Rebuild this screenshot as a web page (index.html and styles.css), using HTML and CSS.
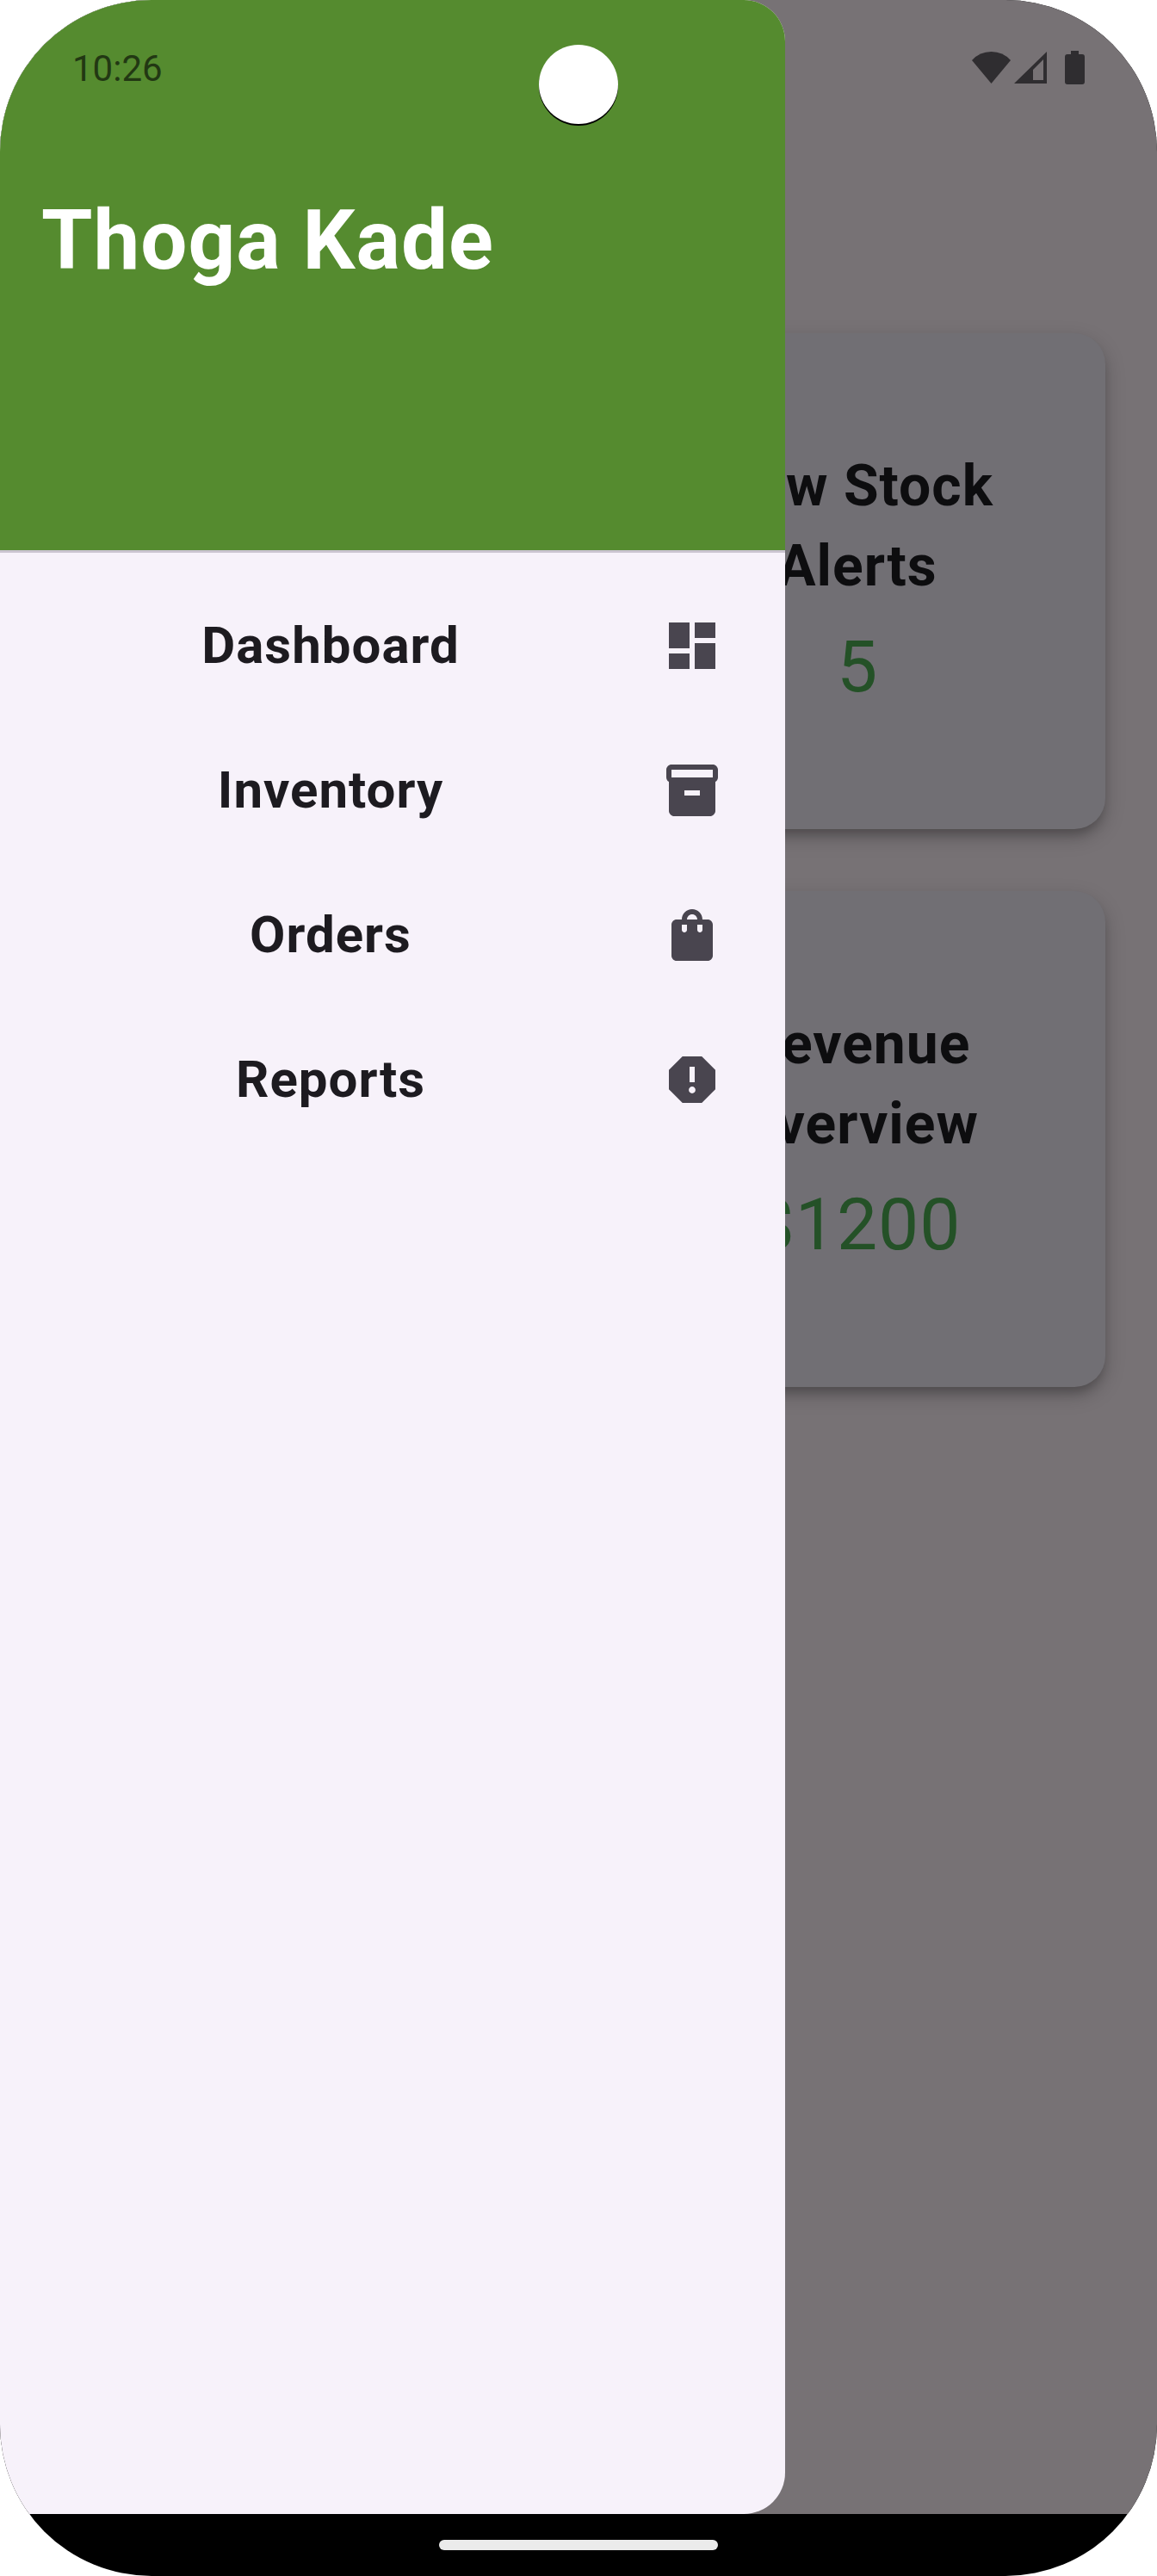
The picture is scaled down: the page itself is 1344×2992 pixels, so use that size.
FILE: index.html
```html
<!DOCTYPE html>
<html lang="en">
<head>
  <meta charset="utf-8">
  <meta name="viewport" content="width=device-width, initial-scale=1">
  <title>Thoga Kade</title>
  <link rel="stylesheet" href="styles.css">
</head>
<body>
  <div class="device">
    <div class="screen">
      <main class="dashboard">
        <section class="card">
          <h2 class="card-title">Low Stock Alerts</h2>
          <p class="card-value">5</p>
        </section>
        <section class="card">
          <h2 class="card-title">Revenue Overview</h2>
          <p class="card-value">$1200</p>
        </section>
      </main>

      <aside class="drawer">
        <header class="drawer-header">
          <h1 class="drawer-title">Thoga Kade</h1>
        </header>
        <nav class="menu">
          <a class="menu-item" href="#dashboard">
            <span class="menu-label">Dashboard</span>
            <svg class="menu-icon" viewBox="0 0 24 24" aria-hidden="true"><path d="M3 13h8V3H3v10zm0 8h8v-6H3v6zm10 0h8V11h-8v10zm0-18v6h8V3h-8z"/></svg>
          </a>
          <a class="menu-item" href="#inventory">
            <span class="menu-label">Inventory</span>
            <svg class="menu-icon" viewBox="0 0 24 24" aria-hidden="true"><path fill-rule="evenodd" d="M20 2H4c-1 0-2 .9-2 2v3.010c0 .720.430 1.340 1 1.690V20c0 1.100 1.100 2 2 2h14c.9 0 2-.9 2-2V8.700c.570-.350 1-.970 1-1.690V4c0-1.100-1-2-2-2zm-5 12H9v-2h6v2zm5-7H4V4h16v3z"/></svg>
          </a>
          <a class="menu-item" href="#orders">
            <span class="menu-label">Orders</span>
            <svg class="menu-icon" viewBox="0 0 24 24" aria-hidden="true"><path d="M18 6h-2c0-2.210-1.790-4-4-4S8 3.790 8 6H6c-1.100 0-2 .9-2 2v12c0 1.100.9 2 2 2h12c1.100 0 2-.9 2-2V8c0-1.100-.9-2-2-2zm-8 4c0 .550-.450 1-1 1s-1-.450-1-1V8h2v2zm2-6c1.100 0 2 .9 2 2h-4c0-1.100.9-2 2-2zm4 6c0 .550-.450 1-1 1s-1-.450-1-1V8h2v2z"/></svg>
          </a>
          <a class="menu-item" href="#reports">
            <span class="menu-label">Reports</span>
            <svg class="menu-icon" viewBox="0 0 24 24" aria-hidden="true"><path d="M15.730 3H8.270L3 8.270v7.460L8.270 21h7.460L21 15.730V8.270L15.730 3zM12 17.300c-.720 0-1.300-.580-1.300-1.300s.580-1.300 1.300-1.300 1.300.580 1.300 1.300-.580 1.300-1.300 1.300zm1-4.300h-2V7h2v6z"/></svg>
          </a>
        </nav>
      </aside>

      <div class="status-bar">
        <time class="clock">10:26</time>
        <span class="camera"></span>
        <div class="status-icons">
          <svg width="45" height="39" viewBox="0 0 45 39" aria-hidden="true"><path d="M0 11Q9 1 22.500 1T45 11L22.500 38z"/></svg>
          <svg width="38" height="39" viewBox="0 0 38 39" aria-hidden="true"><path fill-rule="evenodd" d="M38 1V38H0zM34 10L22 22V34H34z"/></svg>
          <svg class="battery" width="23" height="39" viewBox="0 0 23 39" aria-hidden="true"><path d="M7 0h9v4h4a3 3 0 0 1 3 3v29a3 3 0 0 1-3 3H3a3 3 0 0 1-3-3V7a3 3 0 0 1 3-3h4z"/></svg>
        </div>
      </div>
    </div>

    <div class="gesture-bar"><span class="gesture-handle"></span></div>
  </div>
</body>
</html>
```
FILE: styles.css
```css
* {
  box-sizing: border-box;
}

body {
  margin: 0;
  background: #fff;
  font-family: Roboto, sans-serif;
}

h1,
h2,
p {
  margin: 0;
}

.device {
  display: flex;
  flex-direction: column;
  min-height: 100vh;
  border-radius: 176px;
  overflow: hidden;
  background: #000;
}

/* The page, the drawer and the status bar share one grid cell. */
.screen {
  flex: 1;
  display: grid;
  grid-template: "layer" 1fr / 1fr;
  background: #777275;
}

.dashboard,
.drawer,
.status-bar {
  grid-area: layer;
}

.dashboard {
  display: grid;
  grid-template-columns: 1fr 1fr;
  align-content: start;
  gap: 72px;
  padding: 387px 60px 60px;
}

.card {
  grid-column: 2;
  aspect-ratio: 1;
  display: flex;
  flex-direction: column;
  align-items: center;
  justify-content: center;
  gap: 11px;
  padding: 51px 48px 48px;
  border-radius: 36px;
  background: #716f74;
  box-shadow: 0 9px 12px -3px rgba(0, 0, 0, 0.2), 0 9px 24px rgba(0, 0, 0, 0.2);
  text-align: center;
}

.card-title {
  max-width: 360px;
  font-size: 66px;
  line-height: 93px;
  letter-spacing: 1px;
  font-weight: 700;
  color: #0d0d0f;
}

.card-value {
  font-size: 84px;
  line-height: 120px;
  letter-spacing: 1px;
  color: #245127;
}

.drawer {
  width: 912px;
  max-width: 85%;
  border-radius: 0 48px 48px 0;
  overflow: hidden;
  background: #f7f2fa;
}

.drawer-header {
  min-height: 642px;
  padding: 207px 48px 48px;
  border-bottom: 3px solid #cac4d0;
  background: #558b2f;
}

.drawer-title {
  font-size: 96px;
  line-height: 144px;
  letter-spacing: 1px;
  font-weight: 700;
  color: #fff;
}

.menu {
  padding: 24px 0;
}

.menu-item {
  display: flex;
  align-items: center;
  gap: 48px;
  min-height: 168px;
  padding: 0 72px 0 48px;
  color: #1d1b20;
  text-decoration: none;
}

.menu-label {
  flex: 1;
  font-size: 60px;
  line-height: 90px;
  letter-spacing: 1px;
  font-weight: 700;
  text-align: center;
}

.menu-icon {
  width: 72px;
  height: 72px;
  fill: #49454f;
}

.status-bar {
  align-self: start;
  display: grid;
  grid-template-columns: 1fr auto 1fr;
  align-items: start;
  padding: 52px 84px 0;
}

.clock {
  font-size: 42px;
  line-height: 56px;
  color: #223813;
}

.camera {
  width: 92px;
  height: 92px;
  border-radius: 50%;
  background: #fff;
  box-shadow: 0 2px 0 #000;
}

.status-icons {
  display: flex;
  justify-content: flex-end;
  gap: 4px;
  padding-top: 7px;
  fill: #2f2d30;
}

.battery {
  margin-left: 17px;
}

.gesture-bar {
  display: flex;
  align-items: center;
  justify-content: center;
  height: 72px;
}

.gesture-handle {
  width: 324px;
  height: 12px;
  border-radius: 6px;
  background: #ebebeb;
}
```
